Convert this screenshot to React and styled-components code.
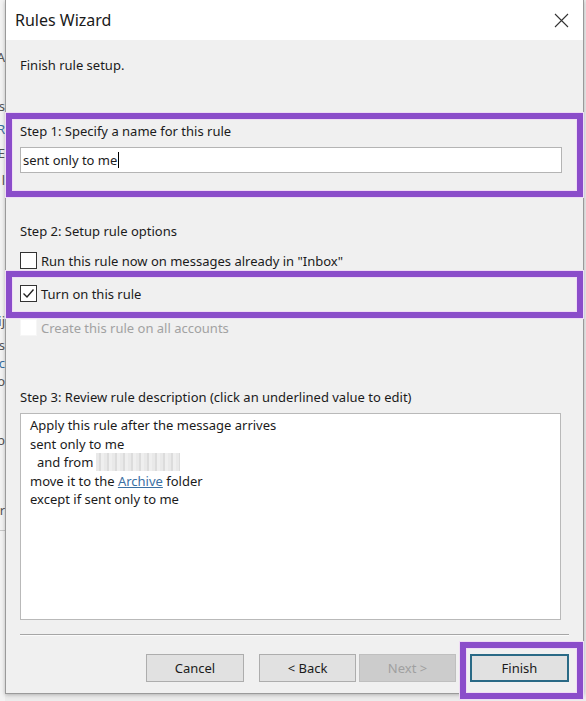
import React from 'react';
import styled, { createGlobalStyle } from 'styled-components';

const GlobalStyle = createGlobalStyle`
  html, body {
    margin: 0;
    padding: 0;
    background: #ececec;
  }
  body {
    font-family: 'Noto Sans', 'Open Sans', sans-serif;
    color: #1b1b1b;
  }
`;

const PURPLE = '#8b4dca';

const Page = styled.div`
  width: 586px;
  height: 701px;
  display: flex;
  overflow: hidden;
  background: #ececec;
`;

/* window behind the dialog, only a sliver is visible */
const Backdrop = styled.div`
  width: 5px;
  flex: none;
  display: flex;
  flex-direction: column;
  align-items: flex-end;
  overflow: hidden;
  background: #f3f3f3;
  font-size: 13px;
  color: #555;
  padding-top: ${(p) => p.top}px;
`;

const Peek = styled.div`
  height: ${(p) => p.h}px;
  line-height: ${(p) => p.h}px;
  white-space: nowrap;
  color: ${(p) => (p.link ? '#3a6fa0' : '#555')};
  border-bottom: ${(p) => (p.rule ? '1px solid #c8c8c8' : 'none')};
`;

const Dialog = styled.div`
  width: 577px;
  height: 693px;
  flex: none;
  display: flex;
  flex-direction: column;
  background: #f0f0f0;
  border: 1px solid #9a9a9a;
  border-top: none;
  box-shadow: 0 1px 4px rgba(0, 0, 0, 0.25);
`;

const TitleBar = styled.div`
  height: 40px;
  flex: none;
  display: flex;
  align-items: center;
  justify-content: space-between;
  background: #fff;
  padding: 0 14px 0 9px;
  font-size: 16px;
  color: #1a1a1a;
`;

const Close = styled.div`
  width: 16px;
  height: 16px;
  display: flex;
  align-items: center;
  justify-content: center;
`;

const Body = styled.div`
  flex: 1;
  display: flex;
  flex-direction: column;
  padding: 16px 14px 0 14px;
  font-size: 13px;
`;

const Text = styled.div`
  line-height: 18px;
  color: ${(p) => (p.muted ? '#a2a2a2' : '#1b1b1b')};
  margin-top: ${(p) => p.mt || 0}px;
`;

const Highlight = styled.div`
  border: 6px solid ${PURPLE};
  box-shadow: inset 0 0 0 1px #f1dcf6, 0 0 0 1px #efdcf5;
  margin: ${(p) => p.m};
  padding: ${(p) => p.pad};
`;

const Input = styled.div`
  height: 26px;
  box-sizing: border-box;
  margin-top: 7px;
  margin-right: 7px;
  background: #fff;
  border: 1px solid #b4b4b4;
  display: flex;
  align-items: center;
  padding-left: 2px;
`;

const Caret = styled.span`
  display: inline-block;
  width: 1px;
  height: 16px;
  background: #000;
  margin-left: 1px;
`;

const Option = styled.label`
  display: flex;
  align-items: center;
  height: 17px;
  gap: 4px;
  margin-top: ${(p) => p.mt || 0}px;
  color: ${(p) => (p.disabled ? '#a2a2a2' : '#1b1b1b')};
`;

const Box = styled.span`
  width: 17px;
  height: 17px;
  box-sizing: border-box;
  flex: none;
  background: #fff;
  border: 1px solid ${(p) => (p.disabled ? '#f6f6f6' : '#333')};
  display: flex;
  align-items: center;
  justify-content: center;
`;

const Description = styled.div`
  height: 207px;
  box-sizing: border-box;
  margin-top: 7px;
  margin-right: 8px;
  background: #fff;
  border: 1px solid #b9b9b9;
  padding: 2px 9px;
`;

const Line = styled.div`
  line-height: 18.5px;
  padding-left: ${(p) => (p.indent ? 7 : 0)}px;
  display: flex;
  align-items: center;
  white-space: pre;
`;

const Blurred = styled.span`
  display: inline-block;
  width: 84px;
  height: 18px;
  margin-left: 3px;
  background: repeating-linear-gradient(
    90deg,
    #e9e9e9 0 3px,
    #dcdcdc 3px 5px,
    #efefef 5px 8px
  );
`;

const Link = styled.span`
  color: #3b70a3;
  text-decoration: underline;
`;

const Separator = styled.div`
  height: 1px;
  background: #a6a6a6;
  border-bottom: 1px solid #fbfbfb;
  margin-top: 14px;
`;

const Footer = styled.div`
  display: flex;
  justify-content: flex-end;
  align-items: flex-start;
  margin-top: 6px;
`;

const Button = styled.div`
  width: ${(p) => p.w || 97}px;
  height: 28px;
  box-sizing: border-box;
  margin-top: ${(p) => (p.plain ? 0 : 12)}px;
  margin-left: ${(p) => p.ml || 0}px;
  display: flex;
  align-items: center;
  justify-content: center;
  background: ${(p) => (p.disabled ? '#cccccc' : '#e1e1e1')};
  border: ${(p) => (p.primary ? '2px solid #2a6a86' : `1px solid ${p.disabled ? '#bfbfbf' : '#adadad'}`)};
  color: ${(p) => (p.disabled ? '#a0a0a0' : '#1b1b1b')};
  font-size: 13px;
`;

const backdropLines = [
  { h: 18, t: 'A' },
  { h: 28, t: '', rule: true },
  { h: 22, t: 's' },
  { h: 24, t: 'R', link: true },
  { h: 24, t: 'E' },
  { h: 30, t: 'l' },
  { h: 110, t: '', rule: true },
  { h: 30, t: 'ij' },
  { h: 18, t: 's' },
  { h: 18, t: 'c', link: true },
  { h: 18, t: 'o' },
  { h: 100, t: 'b' },
  { h: 40, t: 'r', rule: true },
];

const Check = () => (
  <svg width="13" height="13" viewBox="0 0 13 13">
    <polyline points="1.5,6.5 5,10 11.5,2.5" fill="none" stroke="#222" strokeWidth="1.4" />
  </svg>
);

export default function App() {
  return (
    <>
      <GlobalStyle />
      <Page>
        <Backdrop top={48}>
          {backdropLines.map((l, i) => (
            <Peek key={i} h={l.h} link={l.link} rule={l.rule}>
              {l.t}
            </Peek>
          ))}
        </Backdrop>
        <Dialog>
          <TitleBar>
            <span>Rules Wizard</span>
            <Close>
              <svg width="15" height="15" viewBox="0 0 15 15">
                <path d="M1 1 L14 14 M14 1 L1 14" stroke="#333" strokeWidth="1.1" />
              </svg>
            </Close>
          </TitleBar>
          <Body>
            <Text>Finish rule setup.</Text>

            <Highlight m="39px -14px 0 -14px" pad="3px 8px 18px 8px">
              <Text>Step 1: Specify a name for this rule</Text>
              <Input>
                sent only to me
                <Caret />
              </Input>
            </Highlight>

            <Text mt={25}>Step 2: Setup rule options</Text>
            <Option mt={12}>
              <Box />
              Run this rule now on messages already in "Inbox"
            </Option>
            <Highlight m="2px -14px 0 -14px" pad="8px 8px 10px 8px">
              <Option>
                <Box>
                  <Check />
                </Box>
                Turn on this rule
              </Option>
            </Highlight>
            <Option mt={1} disabled>
              <Box disabled />
              Create this rule on all accounts
            </Option>

            <Text mt={52}>Step 3: Review rule description (click an underlined value to edit)</Text>
            <Description>
              <Line>Apply this rule after the message arrives</Line>
              <Line>sent only to me</Line>
              <Line indent>
                and from
                <Blurred />
              </Line>
              <Line>
                move it to the <Link>Archive</Link> folder
              </Line>
              <Line>except if sent only to me</Line>
            </Description>

            <Separator />

            <Footer>
              <Button w={98}>Cancel</Button>
              <Button ml={15}>&lt; Back</Button>
              <Button ml={3} disabled>
                Next &gt;
              </Button>
              <Highlight m="0 -14px -5px 4px" pad="6px 8px 11px 4px">
                <Button plain primary w={99}>
                  Finish
                </Button>
              </Highlight>
            </Footer>
          </Body>
        </Dialog>
      </Page>
    </>
  );
}
